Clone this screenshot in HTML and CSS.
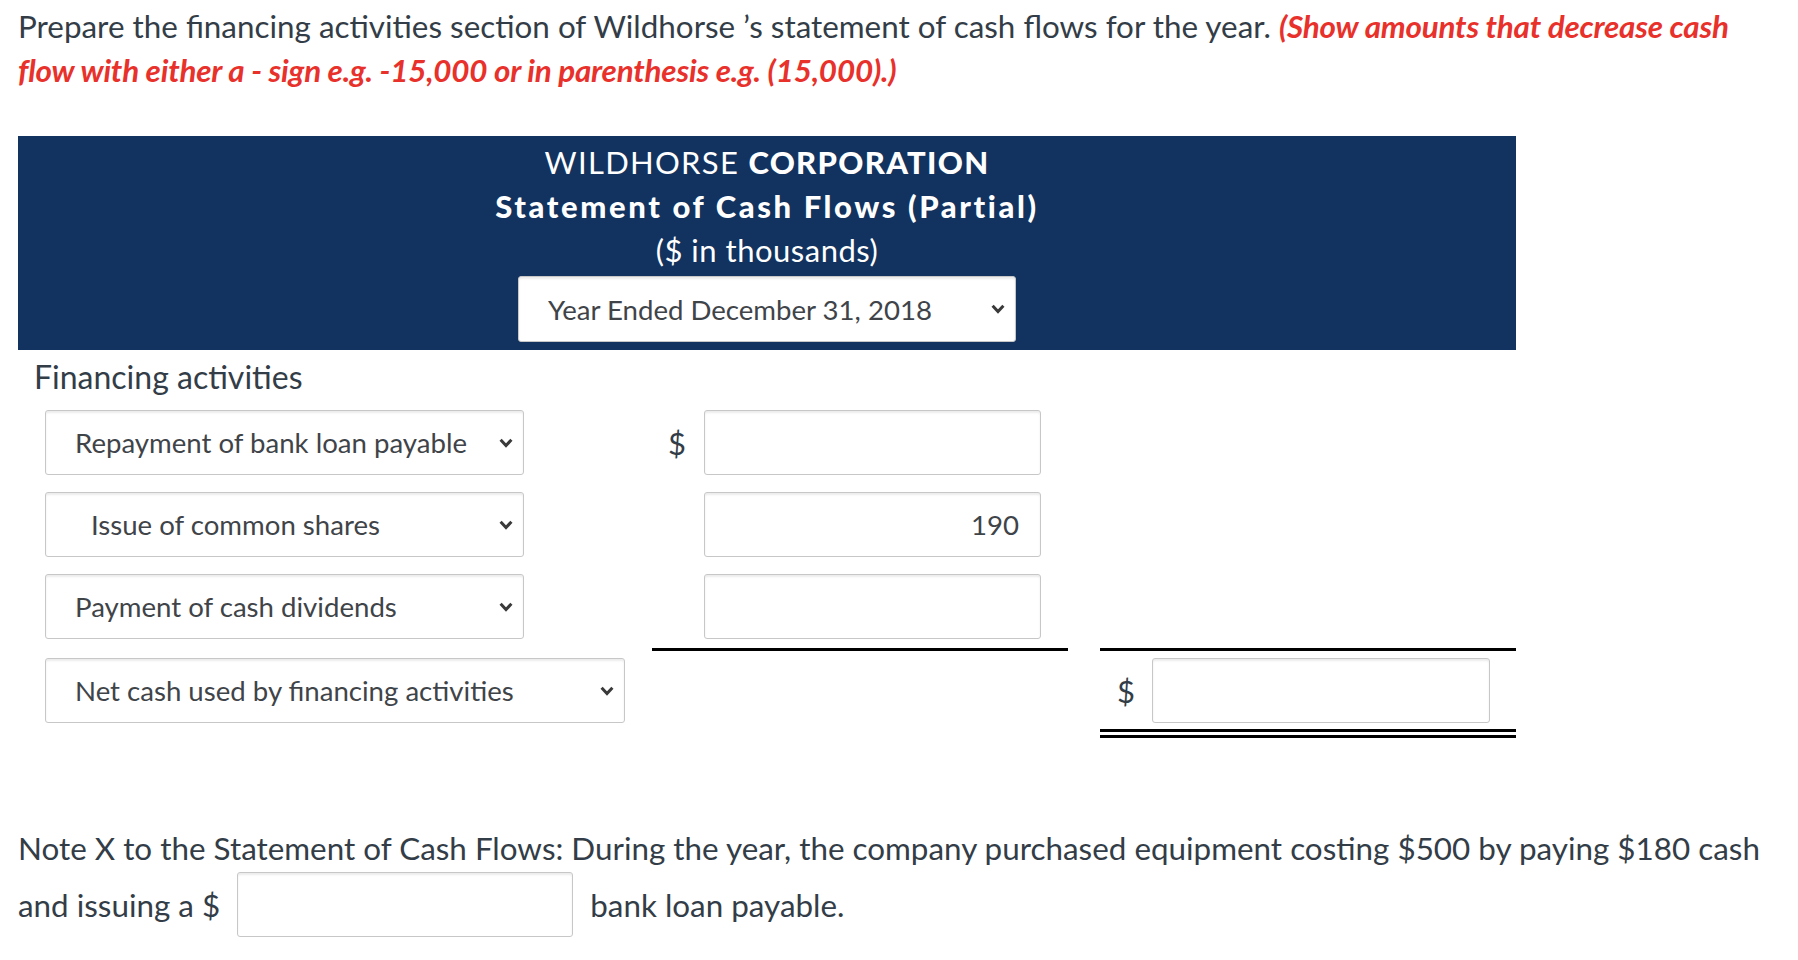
FILE: index.html
```html
<!DOCTYPE html>
<html lang="en">
<head>
<meta charset="utf-8">
<title>Statement of Cash Flows</title>
<link rel="stylesheet" href="styles.css">
</head>
<body>
<div class="page">
  <p class="prompt">Prepare the financing activities section of Wildhorse ’s statement of cash flows for the year. <em class="hint">(Show amounts that decrease cash flow with either a - sign e.g. -15,000 or in parenthesis e.g. (15,000).)</em></p>

  <div class="statement-head">
    <div class="head-line head-first">WILDHORSE <strong>CORPORATION</strong></div>
    <div class="head-line head-bold">Statement of Cash Flows (Partial)</div>
    <div class="head-line">($ in thousands)</div>
    <div class="select-wrap year-select">
      <select class="field-select"><option>Year Ended December 31, 2018</option></select>
      <svg class="chev" viewBox="0 0 14 10" aria-hidden="true"><polyline points="1.6,1.8 7,7.6 12.4,1.8"/></svg>
    </div>
  </div>

  <div class="section-label">Financing activities</div>

  <div class="fin-grid">
    <div class="cell cell-a">
      <div class="select-wrap item-select">
        <select class="field-select"><option>Repayment of bank loan payable</option></select>
        <svg class="chev" viewBox="0 0 14 10" aria-hidden="true"><polyline points="1.6,1.8 7,7.6 12.4,1.8"/></svg>
      </div>
    </div>
    <div class="cell cell-amt"><span class="dollar">$</span><input class="amount" type="text" value=""></div>
    <div class="cell cell-total"></div>

    <div class="cell cell-a">
      <div class="select-wrap item-select">
        <select class="field-select indented"><option>Issue of common shares</option></select>
        <svg class="chev" viewBox="0 0 14 10" aria-hidden="true"><polyline points="1.6,1.8 7,7.6 12.4,1.8"/></svg>
      </div>
    </div>
    <div class="cell cell-amt"><input class="amount" type="text" value="190"></div>
    <div class="cell cell-total"></div>

    <div class="cell cell-a">
      <div class="select-wrap item-select">
        <select class="field-select"><option>Payment of cash dividends</option></select>
        <svg class="chev" viewBox="0 0 14 10" aria-hidden="true"><polyline points="1.6,1.8 7,7.6 12.4,1.8"/></svg>
      </div>
    </div>
    <div class="cell cell-amt underline"><input class="amount" type="text" value=""></div>
    <div class="cell cell-total underline"></div>

    <div class="cell cell-a last">
      <div class="select-wrap total-select">
        <select class="field-select"><option>Net cash used by financing activities</option></select>
        <svg class="chev" viewBox="0 0 14 10" aria-hidden="true"><polyline points="1.6,1.8 7,7.6 12.4,1.8"/></svg>
      </div>
    </div>
    <div class="cell cell-amt last"></div>
    <div class="cell cell-total last total-box"><span class="dollar">$</span><input class="amount" type="text" value=""></div>
  </div>

  <div class="note">
    <div class="note-line">Note X to the Statement of Cash Flows: During the year, the company purchased equipment costing $500 by paying $180 cash</div>
    <div class="note-line note-inline"><span>and issuing a $</span><input class="amount" type="text" value=""><span>bank loan payable.</span></div>
  </div>
</div>
</body>
</html>
```
FILE: styles.css
```css
* { box-sizing: border-box; }

html, body {
  margin: 0;
  padding: 0;
  background: #ffffff;
}

body {
  font-family: Lato, "Open Sans", "Liberation Sans", sans-serif;
  color: #333d47;
}

.page {
  padding: 4px 18px 0 18px;
  width: 1798px;
}

.prompt {
  margin: 0;
  font-size: 31.4px;
  line-height: 44px;
}

.hint {
  color: #e8312b;
  font-weight: 700;
  font-style: italic;
  letter-spacing: -0.2px;
}

.statement-head {
  margin-top: 44px;
  width: 1498px;
  background: #12335f;
  color: #ffffff;
  padding: 4px 0 8px;
  display: flex;
  flex-direction: column;
  align-items: center;
}

.head-line {
  font-size: 31px;
  line-height: 44px;
  letter-spacing: 0.5px;
}

.head-first {
  letter-spacing: 1.3px;
}

.head-line strong,
.head-bold {
  font-weight: 900;
}

.head-bold {
  letter-spacing: 2.6px;
}

.select-wrap {
  position: relative;
  display: inline-flex;
}

.year-select {
  margin-top: 4px;
  width: 498px;
}

.year-select .field-select {
  height: 66px;
}

.field-select {
  -webkit-appearance: none;
  appearance: none;
  width: 100%;
  height: 65px;
  margin: 0;
  background: #ffffff;
  border: 1px solid #c7c7c7;
  border-radius: 3px;
  box-shadow: inset 0 2px 2px rgba(0, 0, 0, 0.08);
  font-family: Lato, "Open Sans", "Liberation Sans", sans-serif;
  font-size: 27.6px;
  color: #3f4449;
  padding: 0 44px 0 29px;
  outline: none;
}

.field-select.indented {
  padding-left: 45px;
}

.chev {
  position: absolute;
  right: 11px;
  top: 50%;
  margin-top: -5px;
  width: 14px;
  height: 10px;
  pointer-events: none;
}

.chev polyline {
  fill: none;
  stroke: #3a3a3a;
  stroke-width: 3;
  stroke-linecap: butt;
  stroke-linejoin: miter;
}

.section-label {
  margin-top: 7px;
  padding-left: 16px;
  font-size: 32px;
  line-height: 40px;
  height: 40px;
}

.fin-grid {
  margin-top: 5px;
  width: 1498px;
  display: grid;
  grid-template-columns: 634px 416px 448px;
}

.cell {
  padding: 8px 0 9px;
  min-height: 82px;
}

.cell-a {
  padding-left: 27px;
}

.item-select {
  width: 479px;
}

.total-select {
  width: 580px;
}

.cell-amt,
.cell-total {
  display: flex;
  justify-content: flex-end;
  align-items: center;
  gap: 18px;
  padding-right: 27px;
}

.cell-total {
  margin-left: 32px;
}

.cell-total.total-box {
  padding-right: 26px;
  gap: 17px;
}

.underline {
  border-bottom: 3px solid #000000;
  min-height: 85px;
}

.cell.last {
  padding-top: 7px;
  padding-bottom: 6px;
  min-height: 78px;
}

.total-box {
  border-bottom: 9px double #000000;
}

.dollar {
  font-size: 31px;
  color: #333d47;
}

.amount {
  width: 337px;
  height: 65px;
  margin: 0;
  background: #ffffff;
  border: 1px solid #c7c7c7;
  border-radius: 3px;
  box-shadow: inset 0 2px 2px rgba(0, 0, 0, 0.08);
  font-family: Lato, "Open Sans", "Liberation Sans", sans-serif;
  font-size: 27.6px;
  color: #3f4449;
  text-align: right;
  padding: 0 21px 0 10px;
  outline: none;
}

.total-box .amount {
  width: 338px;
}

.note {
  margin-top: 88px;
  font-size: 31.4px;
}

.note-line {
  line-height: 44px;
}

.note-inline {
  margin-top: 2px;
  display: flex;
  align-items: center;
  gap: 17px;
  height: 65px;
}

.note-inline .amount {
  width: 336px;
}
```
